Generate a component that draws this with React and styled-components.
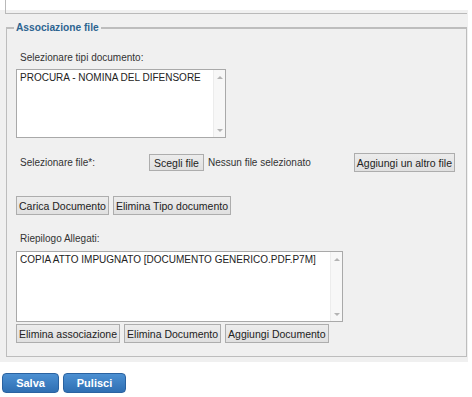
import React from "react";
import styled, { createGlobalStyle } from "styled-components";

const GlobalStyle = createGlobalStyle`
  body {
    margin: 0;
    background: #ffffff;
    font-family: "Liberation Sans", Arial, sans-serif;
    font-size: 10px;
    color: #333333;
  }
`;

const Panel = styled.div`
  display: flex;
  flex-direction: column;
  margin-top: 10px;
  width: 468px;
  background: #f0f0f0;
`;

const PrevTail = styled.div`
  margin: -10px 1px 0 5px;
  height: 13px;
  border-left: 1px solid #b9b9b9;
  border-bottom: 1px solid #b9b9b9;
`;

const Fieldset = styled.fieldset`
  margin: 7px 1px 5px 6px;
  padding: 0 11px 13px 9px;
  border: 1px solid #bdbdbd;
  border-top-width: 2px;
  min-width: 0;
`;

const Legend = styled.legend`
  margin-left: -2px;
  padding: 0 2px;
  font-weight: bold;
  font-size: 10.2px;
  line-height: 14px;
  color: #2d6490;
`;

const Label = styled.div`
  margin-top: ${(p) => p.$top}px;
  padding-left: 4px;
  line-height: 14px;
  color: #333333;
`;

const ListBox = styled.div`
  display: flex;
  margin-top: ${(p) => p.$top}px;
  width: ${(p) => p.$w}px;
  height: ${(p) => p.$h}px;
  box-sizing: border-box;
  background: #ffffff;
  border: 1px solid #a9a9a9;
`;

const ListItems = styled.div`
  flex: 1;
  padding: 1px 3px;
  line-height: 14px;
  color: #222222;
  white-space: nowrap;
  overflow: hidden;
`;

const ScrollBar = styled.div`
  display: flex;
  flex-direction: column;
  justify-content: space-between;
  align-items: center;
  width: 12px;
  padding: 6px 0 5px;
  box-sizing: border-box;
  background: #f7f7f7;
  border-left: 1px solid #ececec;
`;

const Arrow = styled.span`
  width: 0;
  height: 0;
  border-left: 3px solid transparent;
  border-right: 3px solid transparent;
  ${(p) =>
    p.$down
      ? "border-top: 3px solid #b4b4b4;"
      : "border-bottom: 3px solid #b4b4b4;"}
`;

const Row = styled.div`
  display: flex;
  align-items: center;
  gap: ${(p) => p.$gap || 4}px;
  margin-top: ${(p) => p.$top}px;
  height: 19px;
`;

const FileLabel = styled.div`
  width: 125px;
  padding-left: 4px;
  color: #333333;
`;

const FileName = styled.span`
  color: #333333;
  white-space: nowrap;
`;

const GrayButton = styled.button`
  height: ${(p) => p.$h || 19}px;
  margin-left: ${(p) => (p.$push ? "auto" : "0")};
  padding: 0 ${(p) => p.$pad || 2}px;
  font-family: inherit;
  font-size: 10.5px;
  color: #222222;
  background: linear-gradient(#ececec, #e0e0e0);
  border: 1px solid #adadad;
  border-radius: 0;
  white-space: nowrap;
`;

const ButtonBar = styled.div`
  display: flex;
  gap: 4px;
  margin: 11px 0 0 2px;
`;

const BlueButton = styled.button`
  width: ${(p) => p.$w}px;
  height: 20px;
  padding: 0;
  font-family: inherit;
  font-size: 11px;
  font-weight: bold;
  color: #ffffff;
  background: linear-gradient(#4c90d2, #2f6fb3);
  border: 1px solid #2a62a0;
  border-radius: 4px;
`;

const Scroller = () => (
  <ScrollBar>
    <Arrow />
    <Arrow $down />
  </ScrollBar>
);

export default function App() {
  return (
    <>
      <GlobalStyle />
      <Panel>
        <PrevTail />
        <Fieldset>
          <Legend>Associazione file</Legend>
          <Label $top={16}>Selezionare tipi documento:</Label>
          <ListBox $top={4} $w={210} $h={69}>
            <ListItems>PROCURA - NOMINA DEL DIFENSORE</ListItems>
            <Scroller />
          </ListBox>
          <Row $top={15}>
            <FileLabel>Selezionare file*:</FileLabel>
            <GrayButton $h={17} $pad={4}>Scegli file</GrayButton>
            <FileName>Nessun file selezionato</FileName>
            <GrayButton $push>Aggiungi un altro file</GrayButton>
          </Row>
          <Row $top={24}>
            <GrayButton>Carica Documento</GrayButton>
            <GrayButton>Elimina Tipo documento</GrayButton>
          </Row>
          <Label $top={17}>Riepilogo Allegati:</Label>
          <ListBox $top={5} $w={327} $h={71}>
            <ListItems>COPIA ATTO IMPUGNATO [DOCUMENTO GENERICO.PDF.P7M]</ListItems>
            <Scroller />
          </ListBox>
          <Row $top={2} $gap={4}>
            <GrayButton>Elimina associazione</GrayButton>
            <GrayButton>Elimina Documento</GrayButton>
            <GrayButton>Aggiungi Documento</GrayButton>
          </Row>
        </Fieldset>
      </Panel>
      <ButtonBar>
        <BlueButton $w={57}>Salva</BlueButton>
        <BlueButton $w={63}>Pulisci</BlueButton>
      </ButtonBar>
    </>
  );
}
